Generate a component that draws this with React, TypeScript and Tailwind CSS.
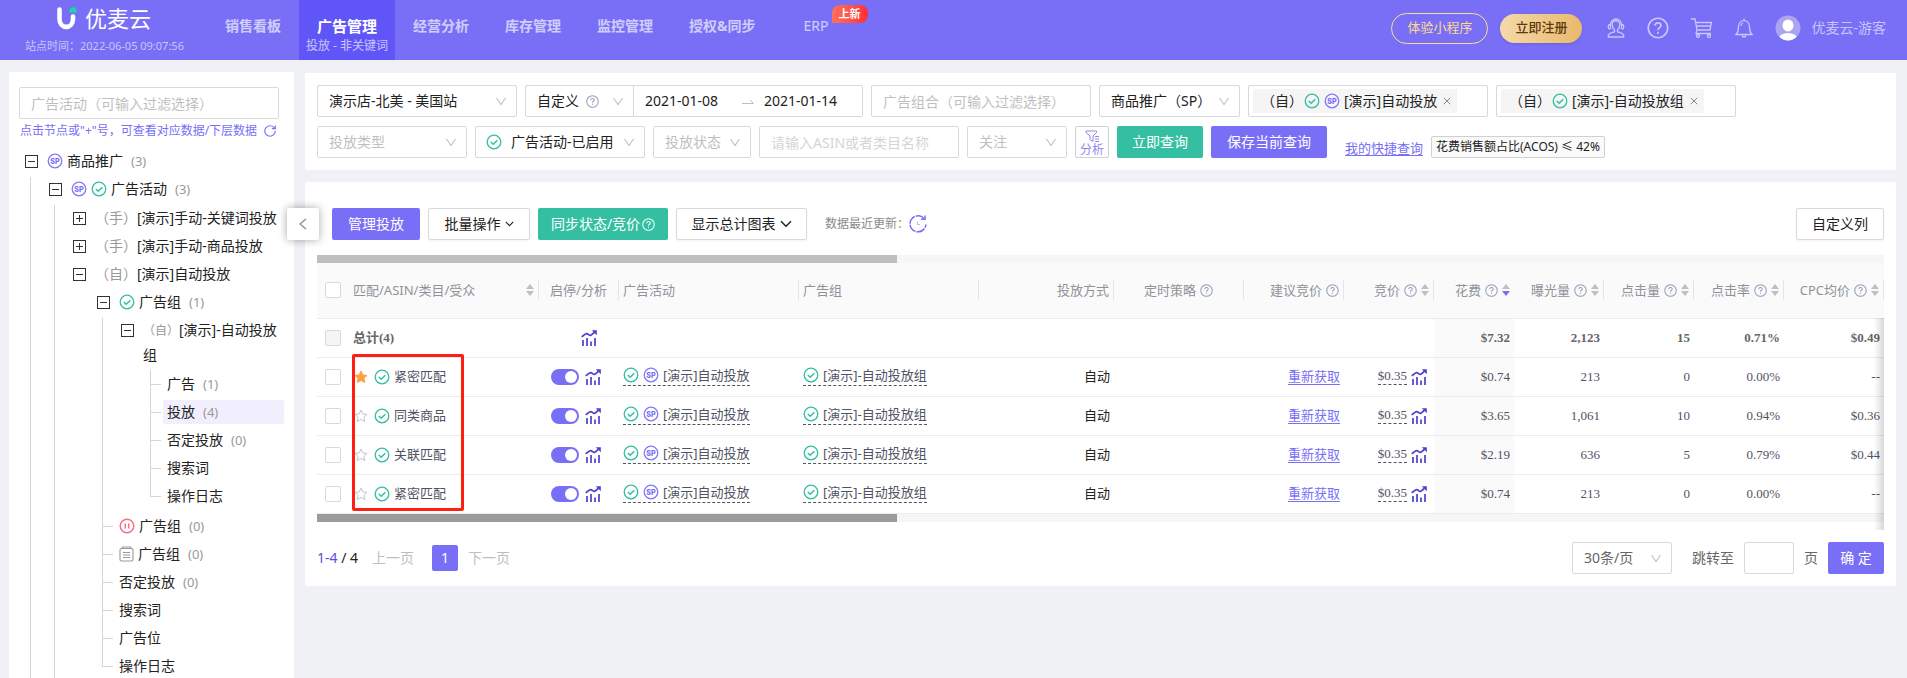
import { useState, type ReactNode } from 'react';
import { RotateCw, X } from 'lucide-react';

const sans = "font-['Noto_Sans','Noto_Sans_CJK_SC',sans-serif]";
const serif = "font-['Liberation_Serif','Noto_Sans_CJK_SC',serif]";

/* ---------- icons ---------- */

function CheckIcon() {
  return (
    <svg viewBox="0 0 16 16" className="size-4 shrink-0" fill="none" stroke="#34bfa3" strokeWidth="1.3">
      <circle cx="8" cy="8" r="6.8" />
      <path d="M4.8 8l2.4 2.3 4.1-4.1" strokeWidth="1.5" />
    </svg>
  );
}

function SpIcon() {
  return (
    <svg viewBox="0 0 16 16" className="size-4 shrink-0">
      <circle cx="8" cy="8" r="6.8" fill="none" stroke="#8578f8" strokeWidth="1.3" />
      <text x="8" y="10.6" textAnchor="middle" fontSize="7.2" fontWeight="800" fill="#786ff6" fontFamily="Inter, sans-serif">
        SP
      </text>
    </svg>
  );
}

function PauseIcon() {
  return (
    <svg viewBox="0 0 16 16" className="size-4 shrink-0" fill="none" stroke="#fb6b86" strokeWidth="1.4">
      <circle cx="8" cy="8" r="6.8" />
      <path d="M6.3 5.500v5M9.700 5.500v5" />
    </svg>
  );
}

function ArchiveIcon() {
  return (
    <svg viewBox="0 0 15 16" className="h-4 w-[15px] shrink-0" fill="none" stroke="#999" strokeWidth="1.1">
      <rect x="1" y="2.5" width="13" height="12.5" rx="1.5" />
      <path d="M2.5 2.5l1-1.5h8l1 1.5M4 6.5h7M4 9h7M4 11.5h7" />
    </svg>
  );
}

function HelpIcon({ className = 'size-[13px] text-[#949db8]' }: { className?: string }) {
  return (
    <svg viewBox="0 0 14 14" className={`${className} shrink-0`} fill="none" stroke="currentColor" strokeWidth="1.1">
      <circle cx="7" cy="7" r="6.2" />
      <path d="M5.1 5.600c0-1.200.8-1.900 1.900-1.900s1.900.7 1.900 1.700c0 1.300-1.900 1.400-1.900 2.900M7 9.400v1.200" />
    </svg>
  );
}

function ChartIcon() {
  return (
    <svg viewBox="0 0 16 16" className="size-4 shrink-0" fill="none" stroke="#4a40d0" strokeWidth="1.7">
      <path d="M.6 6.800C3 6 3.800 3.600 5.600 3.600S8 5.600 9.500 5.300 12 3.200 13.500 2.200" />
      <path d="M10.800.2h5v5z" fill="#4a40d0" stroke="none" />
      <path d="M2 10v6M6 8v8M10 11.500v4.500M14 8v8" />
    </svg>
  );
}

function StarIcon({ filled }: { filled: boolean }) {
  return (
    <svg viewBox="0 0 14 14" className="size-3.5 shrink-0" fill={filled ? '#ffa03c' : 'none'} stroke={filled ? '#ffa03c' : '#c0c4cc'}>
      <path d="M7 1l1.800 3.900 4.200.5-3.100 2.900.8 4.200L7 10.400l-3.700 2.100.8-4.200L1 5.400l4.200-.5z" strokeLinejoin="round" />
    </svg>
  );
}

function Sorter({ active = false }: { active?: boolean }) {
  return (
    <svg viewBox="0 0 8 12" className="h-3 w-2 shrink-0">
      <path d="M4 0l4 5H0z" fill="#bfbfbf" />
      <path d="M4 12L0 7h8z" fill={active ? '#786ff6' : '#bfbfbf'} />
    </svg>
  );
}

function ThinChevron({ className = '' }: { className?: string }) {
  return (
    <svg viewBox="0 0 10 9" className={`h-[9px] w-2.5 text-[#bfbfbf] ${className}`} fill="none" stroke="currentColor" strokeWidth="1.1">
      <path d="M.5 1L5 7.500 9.500 1" />
    </svg>
  );
}

function BoldChevron({ className }: { className: string }) {
  return (
    <svg viewBox="0 0 12 8" className={`${className} shrink-0`} fill="none" stroke="currentColor" strokeWidth="1.500">
      <path d="M1 1.200l5 5 5-5" />
    </svg>
  );
}

function HeadsetIcon() {
  return (
    <svg viewBox="0 0 18 20" className="h-5 w-[18px]" fill="none" stroke="currentColor" strokeWidth="1.3">
      <path d="M3.500 6.500a5.500 5.500 0 0 1 11 0M3.500 6v5M14.500 6v5" />
      <path d="M3 6.500c-2.400.3-2.400 4.200 0 4.500M15 6.500c2.400.3 2.400 4.200 0 4.500" />
      <path d="M5.200 6.500c0-5 7.600-5 7.600 0 0 3-1.200 4.500-2.300 5.500v1.800c2 1 6.200 1.200 6.200 4.200v1H1.300v-1c0-3 4.200-3.200 6.200-4.200V12C6.400 11 5.200 9.500 5.200 6.500z" />
    </svg>
  );
}

function CartIcon() {
  return (
    <svg viewBox="0 0 22 20" className="h-5 w-[22px]" fill="none" stroke="currentColor" strokeWidth="1.300">
      <path d="M0 1h4l2 11-1 3.500h15M5 4.500h15.500L19 12H6M5.600 8h14" />
      <circle cx="7" cy="18" r="1.500" />
      <circle cx="18" cy="18" r="1.500" />
    </svg>
  );
}

function BellIcon() {
  return (
    <svg viewBox="0 0 18 20" className="h-5 w-[18px]" fill="none" stroke="currentColor" strokeWidth="1.300">
      <path d="M9 .5v2M3.500 9c0-8.500 11-8.500 11 0 0 4.500.5 5.500 2.500 7.500H1C3 14.500 3.500 13.500 3.500 9zM7 17.500c.5 2 3.500 2 4 0M6 8c0-1.500.8-2.600 2-3" />
    </svg>
  );
}

function Avatar() {
  return (
    <svg viewBox="0 0 26 26" className="size-[26px]">
      <defs>
        <clipPath id="avatar">
          <circle cx="13" cy="13" r="12.500" />
        </clipPath>
      </defs>
      <circle cx="13" cy="13" r="12.500" fill="#aaa5ee" />
      <g clipPath="url(#avatar)" fill="#fff">
        <ellipse cx="13" cy="10.500" rx="5.500" ry="6" />
        <ellipse cx="13" cy="24" rx="9.500" ry="6" />
      </g>
    </svg>
  );
}

function Logo() {
  return (
    <svg viewBox="0 0 20 23" className="h-[23px] w-5" fill="none">
      <path d="M2.500 2.500V12c0 10.500 13.500 10.500 13.500 0V9.500" stroke="#fff" strokeWidth="4.600" strokeLinecap="round" />
      <path d="M12.500 5.500V3.800C12.500 1.500 14 .3 16 .3s3.500 1.200 3.500 3.200v2z" fill="#11dba6" />
    </svg>
  );
}

/* ---------- header ---------- */

const navItems = ['经营分析', '库存管理', '监控管理', '授权&同步'];

function Header() {
  return (
    <header className="flex h-15 shrink-0 items-start bg-[#786ff6] text-white">
      <div className="flex w-[207px] flex-col pl-[25px]">
        <div className="flex h-9 items-center gap-2 pl-8">
          <Logo />
          <span className="text-[22px] leading-9">优麦云</span>
        </div>
        <span className="text-[11px] leading-5 whitespace-nowrap text-white/60">站点时间：2022-06-05 09:07:56</span>
      </div>
      <nav className="flex text-sm font-bold text-white/65">
        <a href="#board" className="px-[18px] pt-4 leading-5">销售看板</a>
        <a href="#ads" className="flex h-15 w-24 flex-col items-center bg-[#6056f8] pt-4 text-white">
          <span className="text-[15px] leading-5">广告管理</span>
          <span className="text-xs leading-5 font-normal text-white/65">投放 - 非关键词</span>
        </a>
        {navItems.map(item => (
          <a key={item} href="#nav" className="px-[18px] pt-4 leading-5">
            {item}
          </a>
        ))}
        <a href="#erp" className="relative ml-3 px-[18px] pt-4 leading-5 font-normal">
          ERP
          <span className="absolute top-[5px] left-[46px] h-[18px] w-9 rounded-t-lg rounded-br-lg bg-linear-to-r from-[#ff6f5c] to-[#ff2a36] text-center text-[11px] leading-[18px] font-bold text-white">
            上新
          </span>
        </a>
      </nav>
      <div className="ml-auto flex h-14 items-center pr-[21px] text-white/60">
        <button className="h-[31px] rounded-full border border-[#fbdc8e] px-[15px] text-[13px] text-[#fbdc8e]">体验小程序</button>
        <button className="ml-3 h-[29px] rounded-full bg-linear-to-r from-[#f5d9a8] to-[#e8b96c] px-[15px] text-[13px] font-medium text-[#5d3a0e] shadow-sm">
          立即注册
        </button>
        <div className="ml-[25px] flex items-center gap-[22px]">
          <button aria-label="客服"><HeadsetIcon /></button>
          <button aria-label="帮助"><HelpIcon className="size-[22px]" /></button>
          <button aria-label="购物车"><CartIcon /></button>
          <button aria-label="通知"><BellIcon /></button>
          <button className="flex items-center gap-2.5 text-sm">
            <Avatar />
            优麦云-游客
          </button>
        </div>
      </div>
    </header>
  );
}

/* ---------- sidebar tree ---------- */

interface Node {
  label: string;
  prefix?: string;
  smallPrefix?: boolean;
  count?: number;
  icons?: ReactNode;
  state?: 'open' | 'closed';
  more?: boolean;
  selected?: boolean;
  children?: Node[];
}

const tree: Node[] = [
  {
    label: '商品推广',
    count: 3,
    icons: <SpIcon />,
    state: 'open',
    more: true,
    children: [
      {
        label: '广告活动',
        count: 3,
        icons: <><SpIcon /><CheckIcon /></>,
        state: 'open',
        more: true,
        children: [
          { label: '[演示]手动-关键词投放', prefix: '（手）', state: 'closed' },
          { label: '[演示]手动-商品投放', prefix: '（手）', state: 'closed' },
          {
            label: '[演示]自动投放',
            prefix: '（自）',
            state: 'open',
            children: [
              {
                label: '广告组',
                count: 1,
                icons: <CheckIcon />,
                state: 'open',
                more: true,
                children: [
                  {
                    label: '[演示]-自动投放组',
                    prefix: '（自）',
                    smallPrefix: true,
                    state: 'open',
                    children: [
                      { label: '广告', count: 1 },
                      { label: '投放', count: 4, selected: true },
                      { label: '否定投放', count: 0 },
                      { label: '搜索词' },
                      { label: '操作日志' },
                    ],
                  },
                ],
              },
              { label: '广告组', count: 0, icons: <PauseIcon /> },
              { label: '广告组', count: 0, icons: <ArchiveIcon /> },
              { label: '否定投放', count: 0 },
              { label: '搜索词' },
              { label: '广告位' },
              { label: '操作日志' },
            ],
          },
        ],
      },
    ],
  },
];

function TreeItem({ node, last }: { node: Node; last: boolean }) {
  const padTop = node.children && node.children[0].state !== 'open';
  const padBottom = node.children && !node.more;
  return (
    <li className="flex">
      <div className="flex w-6 shrink-0 flex-col">
        {node.state ? (
          <>
            <div className="flex h-7 items-center justify-center">
              <button
                aria-label={node.state === 'open' ? '收起' : '展开'}
                className="relative flex size-[13px] items-center justify-center border border-[#333]"
              >
                <span className="h-px w-[7px] bg-[#333]" />
                {node.state === 'closed' && <span className="absolute h-[7px] w-px bg-[#333]" />}
              </button>
            </div>
            {node.more && <div className="mt-0.5 ml-[11px] flex-1 border-l border-[#d5d5d5]" />}
          </>
        ) : (
          <>
            <div className="ml-[11px] h-[15px] w-[11px] border-b border-l border-[#d5d5d5]" />
            {!last && <div className="ml-[11px] flex-1 border-l border-[#d5d5d5]" />}
          </>
        )}
      </div>
      <div className="min-w-0 flex-1">
        <div className="py-0.5">
          <div className={`flex rounded-xs px-1 text-sm leading-6 text-[#222] ${node.selected ? 'bg-[#f1effe]' : ''}`}>
            {node.icons && <span className="mr-1 flex items-center gap-1">{node.icons}</span>}
            <span>
              {node.prefix && (
                <span className={`inline-block text-right text-[#999] ${node.smallPrefix ? 'w-9 text-xs leading-6' : 'w-[42px]'}`}>
                  {node.prefix}
                </span>
              )}
              {node.label}
              {node.count !== undefined && <span className="ml-2 text-[13px] text-[#999]">({node.count})</span>}
            </span>
          </div>
        </div>
        {node.children && (
          <ul className={`${padTop ? 'pt-px' : ''} ${padBottom ? 'pb-0.5' : ''}`}>
            {node.children.map((child, i) => (
              <TreeItem key={i} node={child} last={i === node.children!.length - 1} />
            ))}
          </ul>
        )}
      </div>
    </li>
  );
}

function Sidebar() {
  return (
    <aside className="relative w-[285px] shrink-0 bg-white">
      <div className="flex h-full flex-col overflow-hidden px-2.5 pt-[15px]">
        <div className="shrink-0 pr-[5px]">
          <input
            aria-label="广告活动"
            placeholder="广告活动（可输入过滤选择）"
            className="h-8 w-full rounded-xs border border-[#d9d9d9] px-[11px] text-sm placeholder:text-[#bfbfbf] focus:outline-none"
          />
        </div>
        <p className="flex h-7 shrink-0 items-center gap-1.5 pb-1 pl-px text-xs whitespace-nowrap text-[#786ff6]">
          点击节点或"+"号，可查看对应数据/下层数据
          <RotateCw className="size-3.5" strokeWidth={2} />
        </p>
        <ul className="flex-1">
          {tree.map((node, i) => (
            <TreeItem key={i} node={node} last />
          ))}
        </ul>
      </div>
      <button
        aria-label="收起侧栏"
        className="absolute top-[136px] -right-[25px] z-10 flex size-8 items-center justify-center rounded-xs bg-white shadow-[0_0_8px_rgba(0,0,0,0.35)]"
      >
        <svg viewBox="0 0 8 14" className="h-3.5 w-2" fill="none" stroke="#888" strokeWidth="1.200">
          <path d="M7 2L1 7l6 5" />
        </svg>
      </button>
    </aside>
  );
}

/* ---------- filters ---------- */

interface SelectProps {
  label: string;
  value: string;
  width: string;
  muted?: boolean;
  icon?: ReactNode;
}

function Select({ label, value, width, muted, icon }: SelectProps) {
  return (
    <div className={`relative ${width}`}>
      {icon && <span className="absolute top-2 left-[11px]">{icon}</span>}
      <select
        aria-label={label}
        className={`h-8 w-full appearance-none rounded-xs border border-[#d9d9d9] bg-white pr-5 text-sm focus:outline-none ${icon ? 'pl-[35px]' : 'pl-[11px]'} ${muted ? 'text-[#bfbfbf]' : 'text-[#222]'}`}
      >
        <option>{value}</option>
      </select>
      <ThinChevron className="pointer-events-none absolute top-3 right-[11px]" />
    </div>
  );
}

function TagBox({ label, prefix, icons, name }: { label: string; prefix: string; icons: ReactNode; name: string }) {
  return (
    <div className="flex h-8 w-60 items-center rounded-xs border border-[#d9d9d9] px-1 text-sm text-[#222]">
      <span className="flex h-6 items-center gap-1 bg-[#f5f5f5] pr-1 pl-2 whitespace-nowrap">
        <span className="w-[39px] text-right">{prefix}</span>
        {icons}
        <span>{name}</span>
        <button aria-label="移除">
          <X className="size-3 text-[#888]" strokeWidth={2} />
        </button>
      </span>
      <input aria-label={label} className="w-0 min-w-0 flex-1 focus:outline-none" />
    </div>
  );
}

function Filters() {
  return (
    <section className="flex flex-col gap-[9px] bg-white p-3">
      <div className="flex gap-2">
        <Select label="店铺" value="演示店-北美 - 美国站" width="w-50" />
        <div className="flex h-8 w-[338px] items-center rounded-xs border border-[#d9d9d9] text-sm text-[#222]">
          <div className="relative h-full w-[108px] border-r border-[#d9d9d9]">
            <select aria-label="日期类型" className="h-full w-full appearance-none pl-[11px] focus:outline-none">
              <option>自定义</option>
            </select>
            <HelpIcon className="pointer-events-none absolute top-[9px] left-[60px] size-[13px] text-[#949db8]" />
            <ThinChevron className="pointer-events-none absolute top-[11px] right-2.5" />
          </div>
          <input aria-label="开始日期" defaultValue="2021-01-08" className="w-[108px] pl-[11px] focus:outline-none" />
          <svg viewBox="0 0 12 8" className="h-2 w-3" fill="none" stroke="#bfbfbf">
            <path d="M0 6.500h11.500L8 3" />
          </svg>
          <input aria-label="结束日期" defaultValue="2021-01-14" className="w-0 flex-1 pl-2.5 focus:outline-none" />
        </div>
        <input
          aria-label="广告组合"
          placeholder="广告组合（可输入过滤选择）"
          className="h-8 w-55 rounded-xs border border-[#d9d9d9] px-[11px] text-sm placeholder:text-[#bfbfbf] focus:outline-none"
        />
        <Select label="推广类型" value="商品推广（SP）" width="w-[141px]" />
        <TagBox label="广告活动筛选" prefix="（自）" icons={<><CheckIcon /><SpIcon /></>} name="[演示]自动投放" />
        <TagBox label="广告组筛选" prefix="（自）" icons={<CheckIcon />} name="[演示]-自动投放组" />
      </div>
      <div className="flex gap-2">
        <Select label="投放类型" value="投放类型" width="w-[150px]" muted />
        <Select label="广告活动状态" value="广告活动-已启用" width="w-[170px]" icon={<CheckIcon />} />
        <Select label="投放状态" value="投放状态" width="w-[98px]" muted />
        <input
          aria-label="ASIN或者类目名称"
          placeholder="请输入ASIN或者类目名称"
          className="h-8 w-50 rounded-xs border border-[#d9d9d9] px-[11px] text-sm placeholder:text-[#d5d5d5] focus:outline-none"
        />
        <Select label="关注" value="关注" width="w-25" muted />
        <button className="flex h-8 w-[34px] flex-col items-center rounded-xs border border-[#d0cfdc] pt-[3px] text-xs leading-4 text-[#8f88ea]">
          <svg viewBox="0 0 14 12" className="h-3 w-3.5 shrink-0" fill="none" stroke="currentColor">
            <path d="M1 1h10.500v1.500L8 6v5.500L5 9.500V6L1 2.500zM10 6.500h4M10 9h4M10 11.500h4" />
          </svg>
          分析
        </button>
        <button className="h-8 w-[86px] rounded-xs bg-[#34bfa3] text-sm text-white">立即查询</button>
        <button className="h-8 w-[116px] rounded-xs bg-[#786ff6] text-sm text-white shadow-xs">保存当前查询</button>
        <a href="#quick" className="ml-2.5 self-end text-[13px] leading-5 text-[#786ff6] underline underline-offset-2">
          我的快捷查询
        </a>
        <button className="h-[22px] self-end rounded-xs border border-[#d0d0d0] bg-[#fafafa] px-1 text-xs leading-5 text-[#222]">
          花费销售额占比(ACOS) ≤ 42%
        </button>
      </div>
    </section>
  );
}

/* ---------- table ---------- */

interface Column {
  title: string;
  width: string;
  align: string;
  help?: boolean;
  sort?: 'idle' | 'active';
  divider?: boolean;
}

const columns: Column[] = [
  { title: '匹配/ASIN/类目/受众', width: 'w-[190px]', align: 'justify-between', sort: 'idle', divider: true },
  { title: '启停/分析', width: 'w-20', align: 'justify-center', divider: true },
  { title: '广告活动', width: 'w-[180px]', align: 'justify-start', divider: true },
  { title: '广告组', width: 'w-[180px]', align: 'justify-start', divider: true },
  { title: '投放方式', width: 'w-[135px]', align: 'justify-end', divider: true },
  { title: '定时策略', width: 'w-[130px]', align: 'justify-center', help: true, divider: true },
  { title: '建议竞价', width: 'w-[100px]', align: 'justify-end', help: true, divider: true },
  { title: '竞价', width: 'w-[90px]', align: 'justify-end', help: true, sort: 'idle', divider: true },
  { title: '花费', width: 'w-20', align: 'justify-end', help: true, sort: 'active' },
  { title: '曝光量', width: 'w-[90px]', align: 'justify-end', help: true, sort: 'idle', divider: true },
  { title: '点击量', width: 'w-[90px]', align: 'justify-end', help: true, sort: 'idle', divider: true },
  { title: '点击率', width: 'w-[90px]', align: 'justify-end', help: true, sort: 'idle', divider: true },
  { title: 'CPC均价', width: 'w-[100px]', align: 'justify-end', help: true, sort: 'idle', divider: true },
];

const totals = ['$7.32', '2,123', '15', '0.71%', '$0.49'];

const rows = [
  { name: '紧密匹配', starred: true, values: ['$0.74', '213', '0', '0.00%', '--'] },
  { name: '同类商品', starred: false, values: ['$3.65', '1,061', '10', '0.94%', '$0.36'] },
  { name: '关联匹配', starred: false, values: ['$2.19', '636', '5', '0.79%', '$0.44'] },
  { name: '紧密匹配', starred: false, values: ['$0.74', '213', '0', '0.00%', '--'] },
];

const checkbox =
  'block size-4 mx-auto appearance-none rounded-xs border border-[#d9d9d9] bg-white checked:bg-[#786ff6] disabled:bg-[#f5f5f5]';

function Row({ row }: { row: (typeof rows)[number] }) {
  const [enabled, setEnabled] = useState(true);
  const [starred, setStarred] = useState(row.starred);
  const dashed = 'inline-flex items-center gap-1 border-b border-dashed border-[#555] leading-5 whitespace-nowrap';

  return (
    <tr className="h-[39px] border-b border-[#ececec]">
      <td>
        <input type="checkbox" aria-label={`选择${row.name}`} className={checkbox} />
      </td>
      <td className="px-1">
        <div className="flex items-center gap-1.5 pl-px">
          <button aria-label="关注" onClick={() => setStarred(!starred)}>
            <StarIcon filled={starred} />
          </button>
          <span className="flex items-center gap-1">
            <CheckIcon />
            {row.name}
          </span>
        </div>
      </td>
      <td>
        <div className="flex items-center gap-1.5 pl-3">
          <input
            type="checkbox"
            role="switch"
            aria-label="启停"
            checked={enabled}
            onChange={e => setEnabled(e.target.checked)}
            className="h-4 w-7 appearance-none rounded-full bg-[#bfbfbf] p-0.5 before:block before:size-3 before:rounded-full before:bg-white checked:bg-[#786ff6] checked:before:ml-3"
          />
          <button aria-label="分析"><ChartIcon /></button>
        </div>
      </td>
      <td className="px-1">
        <a href="#campaign" className={dashed}>
          <CheckIcon />
          <SpIcon />
          [演示]自动投放
        </a>
      </td>
      <td className="px-1">
        <a href="#group" className={dashed}>
          <CheckIcon />
          [演示]-自动投放组
        </a>
      </td>
      <td className="px-1 text-right text-[#222]">自动</td>
      <td />
      <td className="px-1 text-right">
        <a href="#bid" className="text-[#786ff6] underline underline-offset-3">重新获取</a>
      </td>
      <td>
        <div className="flex items-center justify-end gap-1 pr-[7px]">
          <span className={`border-b border-dashed border-[#555] leading-4 ${serif}`}>$0.35</span>
          <button aria-label="竞价分析"><ChartIcon /></button>
        </div>
      </td>
      {row.values.map((value, i) => (
        <td key={i} className={`px-1 text-right ${serif} ${i === 0 ? 'bg-[#fafafa]' : ''}`}>
          {value}
        </td>
      ))}
    </tr>
  );
}

function Table() {
  return (
    <div className="relative mt-[15px]">
      <div className="h-2 bg-[#f5f6f8]">
        <div className="h-full w-[37%] bg-[#bebebe]" />
      </div>
      <table className="w-full table-fixed border-collapse text-[13px] text-[#4f5363]">
        <thead>
          <tr className="h-[55px] border-b border-[#ececec] bg-[#fafafa] text-[#8f929b]">
            <th className="w-8 font-normal">
              <input type="checkbox" aria-label="全选" className={checkbox} />
            </th>
            {columns.map(col => (
              <th key={col.title} className={`p-0 font-normal ${col.width}`}>
                <div className={`flex h-5 items-center gap-1 px-1 whitespace-nowrap ${col.align} ${col.divider ? 'border-r border-[#e5e5e5]' : ''}`}>
                  {col.title}
                  {col.help && <HelpIcon />}
                  {col.sort && <Sorter active={col.sort === 'active'} />}
                </div>
              </th>
            ))}
          </tr>
        </thead>
        <tbody>
          <tr className={`h-[39px] border-b border-[#ececec] font-bold text-[#666] ${serif}`}>
            <td>
              <input type="checkbox" aria-label="选择总计" disabled className={checkbox} />
            </td>
            <td className="px-1">总计(4)</td>
            <td>
              <button aria-label="总计分析" className="mr-[22px] ml-auto block">
                <ChartIcon />
              </button>
            </td>
            <td colSpan={6} />
            {totals.map((value, i) => (
              <td key={i} className={`px-1 text-right ${i === 0 ? 'bg-[#fafafa]' : ''}`}>
                {value}
              </td>
            ))}
          </tr>
          {rows.map((row, i) => (
            <Row key={i} row={row} />
          ))}
        </tbody>
      </table>
      <div className="h-2 bg-[#f5f6f8]">
        <div className="h-full w-[37%] bg-[#9b9b9b]" />
      </div>
      {/* edge shadow of the scrolled columns */}
      <div className="pointer-events-none absolute top-[63px] right-0 -bottom-2 w-2.5 bg-linear-to-l from-black/15 to-transparent" />
      {/* highlighted targeting group */}
      <div className="pointer-events-none absolute top-[99px] left-[35px] h-[157px] w-28 rounded-xs border-3 border-[#ff1e12]" />
    </div>
  );
}

function Pagination() {
  return (
    <div className="mt-5 flex h-8 items-center text-sm text-[#222]">
      <span>
        <span className="text-[#5a50d6]">1-4</span> / 4
      </span>
      <button className="ml-3.5 text-[#bfbfbf]">上一页</button>
      <button className="ml-[18px] size-[26px] rounded-xs bg-[#786ff6] text-white">1</button>
      <button className="ml-2.5 text-[#bfbfbf]">下一页</button>
      <div className="ml-auto flex items-center text-[#666]">
        <div className="relative w-25">
          <select
            aria-label="每页条数"
            className="h-8 w-full appearance-none rounded-xs border border-[#d9d9d9] bg-white pl-[11px] focus:outline-none"
          >
            <option>30条/页</option>
          </select>
          <ThinChevron className="pointer-events-none absolute top-3 right-[11px]" />
        </div>
        <label htmlFor="jump" className="ml-5">跳转至</label>
        <input id="jump" className="ml-2.5 h-8 w-[50px] rounded-xs border border-[#d9d9d9] px-2 focus:outline-none" />
        <span className="ml-2.5">页</span>
        <button className="ml-2.5 h-8 w-14 rounded-xs bg-[#786ff6] text-white">确 定</button>
      </div>
    </div>
  );
}

function Toolbar() {
  const outline = 'flex h-8 items-center justify-center gap-1 rounded-xs border border-[#d9d9d9] text-sm text-[#222] shadow-xs';
  return (
    <div className="flex items-center gap-2 pl-[15px]">
      <button className="h-8 w-22 rounded-xs bg-[#786ff6] text-sm text-white">管理投放</button>
      <button className={`${outline} w-[102px]`}>
        批量操作
        <BoldChevron className="h-1.5 w-[9px]" />
      </button>
      <button className="flex h-8 w-[130px] items-center justify-center gap-0.5 rounded-xs bg-[#34bfa3] text-sm text-white">
        同步状态/竞价
        <HelpIcon className="size-[13px] text-white" />
      </button>
      <button className={`${outline} w-[131px]`}>
        显示总计图表
        <BoldChevron className="h-2 w-3" />
      </button>
      <div className="ml-2.5 flex items-center text-xs text-[#8a8a8a]">
        数据最近更新：
        <button aria-label="刷新">
          <svg viewBox="0 0 18 18" className="size-[18px]" fill="none" stroke="#786ff6" strokeWidth="1.500">
            <path d="M15 3.500A8 8 0 1 0 17 9.500" strokeDasharray="9 1" />
            <path d="M16 .5v3.800h-4" />
            <path d="M8.500 6.500v3H11" strokeWidth="1" opacity=".5" />
          </svg>
        </button>
      </div>
      <button className={`${outline} ml-auto w-22`}>自定义列</button>
    </div>
  );
}

export default function App() {
  return (
    <div lang="zh-CN" className={`flex h-screen flex-col overflow-hidden bg-[#f0f1f5] ${sans}`}>
      <Header />
      <div className="flex min-h-0 flex-1 gap-[11px] pt-3 pr-[11px] pl-[9px]">
        <Sidebar />
        <main className="flex min-w-0 flex-1 flex-col gap-3 pt-px">
          <Filters />
          <section className="bg-white px-3 pt-[26px] pb-3">
            <Toolbar />
            <Table />
            <Pagination />
          </section>
        </main>
      </div>
    </div>
  );
}
